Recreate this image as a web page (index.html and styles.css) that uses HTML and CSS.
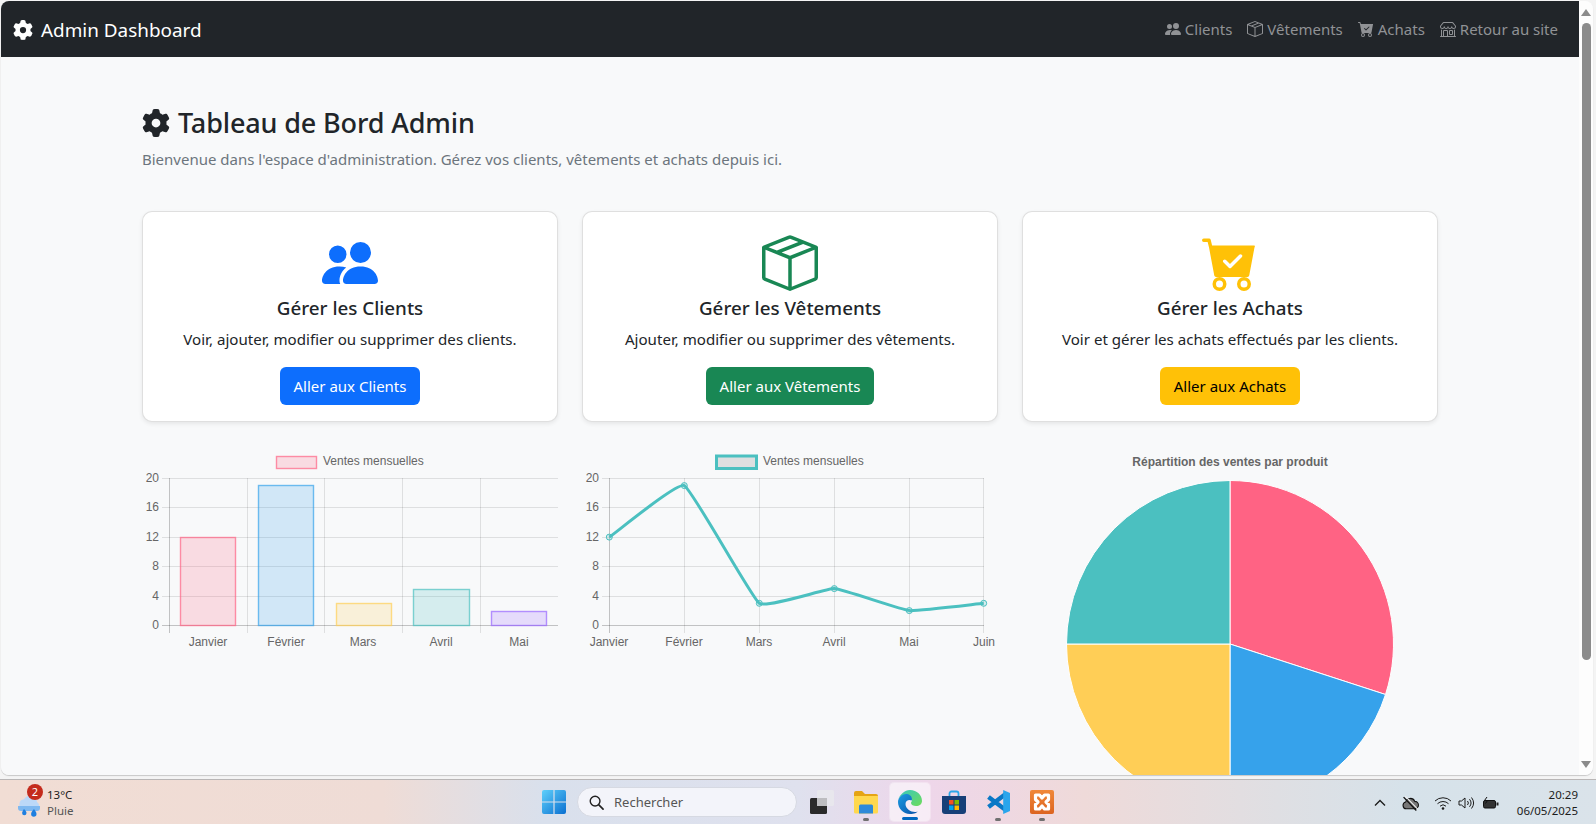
FILE: index.html
```html
<!DOCTYPE html>
<html lang="fr">
<head>
<meta charset="utf-8">
<title>Admin Dashboard</title>
<link rel="stylesheet" href="styles.css">
</head>
<body>
<svg class="defs" width="0" height="0" aria-hidden="true">
  <symbol id="i-gear" viewBox="0 0 512 512"><path d="M495.9 166.6c3.2 8.7 .5 18.4-6.4 24.6l-43.3 39.4c1.1 8.3 1.7 16.8 1.7 25.4s-.6 17.1-1.7 25.4l43.3 39.4c6.9 6.2 9.6 15.9 6.4 24.6c-4.4 11.9-9.7 23.3-15.8 34.3l-4.7 8.1c-6.6 11-14 21.4-22.1 31.2c-5.9 7.2-15.7 9.6-24.5 6.8l-55.7-17.7c-13.4 10.3-28.2 18.9-44 25.4l-12.5 57.1c-2 9.1-9 16.3-18.2 17.8c-13.8 2.3-28 3.5-42.5 3.5s-28.7-1.2-42.5-3.5c-9.2-1.5-16.2-8.7-18.2-17.8l-12.5-57.1c-15.8-6.5-30.6-15.1-44-25.4L83.1 425.9c-8.8 2.8-18.6 .3-24.5-6.8c-8.1-9.8-15.5-20.2-22.1-31.2l-4.7-8.1c-6.1-11-11.4-22.4-15.8-34.3c-3.2-8.7-.5-18.4 6.4-24.6l43.3-39.4C64.6 273.1 64 264.6 64 256s.6-17.1 1.7-25.4L22.4 191.2c-6.9-6.2-9.6-15.9-6.4-24.6c4.4-11.9 9.7-23.3 15.8-34.3l4.7-8.1c6.6-11 14-21.4 22.1-31.2c5.9-7.2 15.7-9.6 24.5-6.8l55.7 17.7c13.4-10.3 28.2-18.9 44-25.4l12.5-57.1c2-9.1 9-16.3 18.2-17.8C227.3 1.2 241.5 0 256 0s28.7 1.2 42.5 3.5c9.2 1.5 16.2 8.7 18.2 17.8l12.5 57.1c15.8 6.5 30.6 15.1 44 25.4l55.7-17.7c8.8-2.8 18.6-.3 24.5 6.8c8.1 9.8 15.5 20.2 22.1 31.2l4.7 8.1c6.1 11 11.4 22.4 15.8 34.3zM256 336a80 80 0 1 0 0-160 80 80 0 1 0 0 160z"/></symbol>
  <symbol id="i-people" viewBox="0 0 16 16"><path d="M7 14s-1 0-1-1 1-4 5-4 5 3 5 4-1 1-1 1H7Zm4-6a3 3 0 1 0 0-6 3 3 0 0 0 0 6Zm-5.784 6A2.238 2.238 0 0 1 5 13c0-1.355.68-2.75 1.936-3.72A6.325 6.325 0 0 0 5 9c-4 0-5 3-5 4s1 1 1 1h4.216ZM4.5 8a2.5 2.5 0 1 0 0-5 2.5 2.5 0 0 0 0 5Z"/></symbol>
  <symbol id="i-box" viewBox="0 0 16 16"><path d="M8.186 1.113a.5.5 0 0 0-.372 0L1.846 3.5l2.404.961L10.404 2l-2.218-.887zm3.564 1.426L5.596 5 8 5.961 14.154 3.5l-2.404-.961zm3.25 1.7-6.5 2.6v7.922l6.5-2.6V4.24zM7.5 14.762V6.838L1 4.239v7.925l6.5 2.6zM7.443.184a1.5 1.5 0 0 1 1.114 0l7.129 2.852A.5.5 0 0 1 16 3.5v8.662a1 1 0 0 1-.629.928l-7.185 2.874a.5.5 0 0 1-.372 0L.63 13.09a1 1 0 0 1-.63-.928V3.5a.5.5 0 0 1 .314-.464L7.443.184z"/></symbol>
  <symbol id="i-cart" viewBox="0 0 16 16"><path d="M.5 1a.5.5 0 0 0 0 1h1.11l.401 1.607 1.498 7.985A.5.5 0 0 0 4 12h1a2 2 0 1 0 0 4 2 2 0 0 0 0-4h7a2 2 0 1 0 0 4 2 2 0 0 0 0-4h1a.5.5 0 0 0 .491-.408l1.5-8A.5.5 0 0 0 15 3H2.89l-.405-1.621A.5.5 0 0 0 2 1H.5zM6 14a1 1 0 1 1-2 0 1 1 0 0 1 2 0zm7 0a1 1 0 1 1-2 0 1 1 0 0 1 2 0zm-1.646-7.646-3 3a.5.5 0 0 1-.708 0l-1.5-1.5a.5.5 0 1 1 .708-.708L8 8.293l2.646-2.647a.5.5 0 0 1 .708.708z"/></symbol>
  <symbol id="i-shop" viewBox="0 0 16 16"><path d="M2.97 1.35A1 1 0 0 1 3.73 1h8.54a1 1 0 0 1 .76.35l2.609 3.044A1.5 1.5 0 0 1 16 5.37v.255a2.375 2.375 0 0 1-4.25 1.458A2.371 2.371 0 0 1 9.875 8 2.37 2.37 0 0 1 8 7.083 2.37 2.37 0 0 1 6.125 8a2.37 2.37 0 0 1-1.875-.917A2.375 2.375 0 0 1 0 5.625V5.37a1.5 1.5 0 0 1 .361-.976l2.61-3.045zm1.78 4.275a1.375 1.375 0 0 0 2.75 0 .5.5 0 0 1 1 0 1.375 1.375 0 0 0 2.75 0 .5.5 0 0 1 1 0 1.375 1.375 0 1 0 2.75 0V5.37a.5.5 0 0 0-.12-.325L12.27 2H3.73L1.12 5.045A.5.5 0 0 0 1 5.37v.255a1.375 1.375 0 0 0 2.75 0 .5.5 0 0 1 1 0zM1.5 8.5A.5.5 0 0 1 2 9v6h1v-5a1 1 0 0 1 1-1h3a1 1 0 0 1 1 1v5h6V9a.5.5 0 0 1 1 0v6h.5a.5.5 0 0 1 0 1H.5a.5.5 0 0 1 0-1H1V9a.5.5 0 0 1 .5-.5zM4 15h3v-5H4v5zm5-5a1 1 0 0 1 1-1h2a1 1 0 0 1 1 1v3a1 1 0 0 1-1 1h-2a1 1 0 0 1-1-1v-3zm3 0h-2v3h2v-3z"/></symbol>
</svg>

<div class="window">
  <div class="page">
    <nav class="navbar">
      <a class="brand"><svg class="brand-icon"><use href="#i-gear"/></svg>Admin Dashboard</a>
      <div class="nav-links">
        <a class="nav-link"><svg class="nav-icon"><use href="#i-people"/></svg>Clients</a>
        <a class="nav-link"><svg class="nav-icon"><use href="#i-box"/></svg>Vêtements</a>
        <a class="nav-link"><svg class="nav-icon"><use href="#i-cart"/></svg>Achats</a>
        <a class="nav-link"><svg class="nav-icon"><use href="#i-shop"/></svg>Retour au site</a>
      </div>
    </nav>
    <main class="container">
      <h1 class="title"><svg class="title-icon"><use href="#i-gear"/></svg>Tableau de Bord Admin</h1>
      <p class="lead">Bienvenue dans l'espace d'administration. Gérez vos clients, vêtements et achats depuis ici.</p>

      <section class="cards">
        <article class="card">
          <svg class="card-icon blue"><use href="#i-people"/></svg>
          <h2 class="card-title">Gérer les Clients</h2>
          <p class="card-text">Voir, ajouter, modifier ou supprimer des clients.</p>
          <a class="btn btn-blue">Aller aux Clients</a>
        </article>
        <article class="card">
          <svg class="card-icon green"><use href="#i-box"/></svg>
          <h2 class="card-title">Gérer les Vêtements</h2>
          <p class="card-text">Ajouter, modifier ou supprimer des vêtements.</p>
          <a class="btn btn-green">Aller aux Vêtements</a>
        </article>
        <article class="card">
          <svg class="card-icon yellow"><use href="#i-cart"/></svg>
          <h2 class="card-title">Gérer les Achats</h2>
          <p class="card-text">Voir et gérer les achats effectués par les clients.</p>
          <a class="btn btn-yellow">Aller aux Achats</a>
        </article>
      </section>

      <section class="charts">
        <svg class="chart" viewBox="142 445 416 210">
          <rect class="lg-bar" x="276.5" y="456.5" width="40" height="12"/>
          <text class="t" x="323" y="465">Ventes mensuelles</text>
          <path class="grid" d="M170 478.5H558M170 507.5H558M170 537.5H558M170 566.5H558M170 596.5H558M247.5 478V633M324.5 478V633M402.5 478V633M480.5 478V633"/>
          <path class="grid" d="M162 478.5H170M162 507.5H170M162 537.5H170M162 566.5H170M162 596.5H170"/>
          <path class="axis" d="M169.5 478V633M162 625.5H558"/>
          <text class="t end" x="159" y="482">20</text>
          <text class="t end" x="159" y="511">16</text>
          <text class="t end" x="159" y="541">12</text>
          <text class="t end" x="159" y="570">8</text>
          <text class="t end" x="159" y="600">4</text>
          <text class="t end" x="159" y="629">0</text>
          <rect class="bar pink" x="180.5" y="537.5" width="55" height="88"/>
          <rect class="bar sky" x="258.5" y="485.500" width="55" height="140"/>
          <rect class="bar sun" x="336.5" y="603.5" width="55" height="22"/>
          <rect class="bar teal" x="413.5" y="589.5" width="56" height="36"/>
          <rect class="bar violet" x="491.5" y="611.5" width="55" height="14"/>
          <text class="t mid" x="208" y="646">Janvier</text>
          <text class="t mid" x="286" y="646">Février</text>
          <text class="t mid" x="363" y="646">Mars</text>
          <text class="t mid" x="441" y="646">Avril</text>
          <text class="t mid" x="519" y="646">Mai</text>
        </svg>

        <svg class="chart" viewBox="582 445 416 210">
          <rect class="lg-line" x="716.5" y="456" width="40" height="12.5"/>
          <text class="t" x="763" y="465">Ventes mensuelles</text>
          <path class="grid" d="M602 478.5H984M602 507.5H984M602 537.5H984M602 566.5H984M602 596.5H984M684.5 478V633M759.5 478V633M834.5 478V633M909.5 478V633M983.5 478V633"/>
          <path class="axis" d="M609.5 478V633M602 625.5H984"/>
          <text class="t end" x="599" y="482">20</text>
          <text class="t end" x="599" y="511">16</text>
          <text class="t end" x="599" y="541">12</text>
          <text class="t end" x="599" y="570">8</text>
          <text class="t end" x="599" y="600">4</text>
          <text class="t end" x="599" y="629">0</text>
          <path class="line" d="M609.3 537.1C617 531.9 676.8 482.3 684.3 485.6C691.8 488.9 751.8 598.15 759.3 603.3C766.8 608.45 826.8 588.2 834.3 588.6C841.8 589 901.8 609.9 909.3 610.6C916.8 611.3 976.3 604 983.7 603.3"/>
          <circle class="dot" cx="609.3" cy="537.1" r="3"/>
          <circle class="dot" cx="684.3" cy="485.6" r="3"/>
          <circle class="dot" cx="759.3" cy="603.3" r="3"/>
          <circle class="dot" cx="834.3" cy="588.6" r="3"/>
          <circle class="dot" cx="909.3" cy="610.6" r="3"/>
          <circle class="dot" cx="983.7" cy="603.3" r="3"/>
          <text class="t mid" x="609" y="646">Janvier</text>
          <text class="t mid" x="684" y="646">Février</text>
          <text class="t mid" x="759" y="646">Mars</text>
          <text class="t mid" x="834" y="646">Avril</text>
          <text class="t mid" x="909" y="646">Mai</text>
          <text class="t mid" x="984" y="646">Juin</text>
        </svg>

        <svg class="chart pie" viewBox="1022 445 416 375">
          <text class="t mid strong" x="1230" y="466">Répartition des ventes par produit</text>
          <path class="slice s1" d="M1230 644V480.5A163.5 163.5 0 0 1 1385.5 694.5Z"/>
          <path class="slice s2" d="M1230 644L1385.5 694.5A163.5 163.5 0 0 1 1230 807.5Z"/>
          <path class="slice s3" d="M1230 644V807.5A163.5 163.5 0 0 1 1066.5 644Z"/>
          <path class="slice s4" d="M1230 644H1066.5A163.5 163.5 0 0 1 1230 480.5Z"/>
        </svg>
      </section>
    </main>
  </div>
  <div class="scrollbar">
    <span class="arrow-up"></span>
    <span class="thumb"></span>
    <span class="arrow-down"></span>
  </div>
</div>

<footer class="taskbar">
  <div class="tb-left">
    <div class="weather">
      <svg class="weather-icon" viewBox="0 0 26 24">
        <path fill="#bcd8f8" d="M7 15a5 5 0 0 1 1-9.800A7 7 0 0 1 21 8a4 4 0 0 1 0 7Z"/>
        <path fill="#7fb8f0" d="M2 12h22v2a3 3 0 0 1-3 3H5a3 3 0 0 1-3-3Z"/>
        <path fill="#1f7fe0" d="M8 15c2 2 2.500 3 2.500 4a2.200 2.200 0 0 1-4.400 0c0-1 .9-2.500 1.900-4ZM18 15c1.500 2 2.500 3.500 2.500 5a2.700 2.700 0 0 1-5.400 0c0-1.500 1.400-3.500 2.900-5Z"/>
      </svg>
      <span class="badge">2</span>
      <div class="weather-text"><span class="temp">13°C</span><span class="cond">Pluie</span></div>
    </div>
  </div>
  <div class="tb-center">
    <div class="tb-item">
      <svg class="tb-icon" viewBox="0 0 24 24">
        <defs><linearGradient id="win" x1="0" y1="0" x2="1" y2="1"><stop offset="0" stop-color="#5fd0fb"/><stop offset="1" stop-color="#0a6fd0"/></linearGradient></defs>
        <path fill="url(#win)" d="M0 2a2 2 0 0 1 2-2h9.400v11.400H0ZM12.600 0H22a2 2 0 0 1 2 2v9.400H12.600ZM0 12.600h11.400V24H2a2 2 0 0 1-2-2ZM12.600 12.600H24V22a2 2 0 0 1-2 2h-9.400Z"/>
      </svg>
    </div>
    <div class="search">
      <svg class="search-icon" viewBox="0 0 16 16"><circle cx="6.500" cy="6.500" r="5.200" fill="none" stroke="#222" stroke-width="1.500"/><path d="M10.500 10.500 15 15" stroke="#222" stroke-width="1.800" stroke-linecap="round"/></svg>
      <span class="search-text">Rechercher</span>
    </div>
    <div class="tb-item">
      <svg class="tb-icon" viewBox="0 0 24 24">
        <rect x="0" y="8" width="17" height="16" rx="1.500" fill="#2a2a2a"/>
        <rect x="7" y="0" width="17" height="16" rx="1.500" fill="#e8e8ec" fill-opacity=".9"/>
        <rect x="7" y="8" width="10" height="8" fill="#bdbdc0"/>
      </svg>
    </div>
    <div class="tb-item has-dot">
      <svg class="tb-icon" viewBox="0 0 24 24">
        <path fill="#e5a414" d="M0 3a2 2 0 0 1 2-2h6l3 3h11a2 2 0 0 1 2 2v3H0Z"/>
        <path fill="#ffd84e" d="M0 6h24v16a1.500 1.500 0 0 1-1.500 1.500h-21A1.500 1.500 0 0 1 0 22Z"/>
        <path fill="#2e8ad8" d="M5 16a1.500 1.500 0 0 1 1.500-1.500h11A1.500 1.500 0 0 1 19 16v7.500H5Z"/>
      </svg>
    </div>
    <div class="tb-item active">
      <svg class="tb-icon" viewBox="0 0 24 24">
        <defs>
          <linearGradient id="edge1" x1="0" y1="0" x2="1" y2="1"><stop offset="0" stop-color="#36c7c0"/><stop offset="1" stop-color="#6fdc5a"/></linearGradient>
          <linearGradient id="edge2" x1="0" y1="0" x2="1" y2="1"><stop offset="0" stop-color="#1b9de2"/><stop offset="1" stop-color="#0a4fa8"/></linearGradient>
        </defs>
        <path fill="url(#edge1)" d="M12 0c7 0 12 5 12 11 0 3-2.500 5-6 5-2.500 0-5-1-5-3 0-1 1-1.500 1-3 0-3-3-5-6-5-4 0-7 2.500-8 5C2 4.500 6.500 0 12 0Z"/>
        <path fill="url(#edge2)" d="M0 12c0-4 4-8 8-8 3 0 6 2 6 5 0 .5-.1 1-.4 1.500-2.600-1.500-6.100.1-6.100 3.500 0 4.500 5 8 9.500 8 1.500 0 2.500-.2 3.500-.8A12 12 0 0 1 12 24C5 24 0 18 0 12Z"/>
      </svg>
      <span class="active-bar"></span>
    </div>
    <div class="tb-item">
      <svg class="tb-icon" viewBox="0 0 24 24">
        <path fill="none" stroke="#2ba6e8" stroke-width="1.800" d="M7.500 7V3.500a2 2 0 0 1 2-2h5a2 2 0 0 1 2 2V7"/>
        <path fill="#173f78" d="M0 6h24v15a3 3 0 0 1-3 3H3a3 3 0 0 1-3-3Z"/>
        <rect x="7" y="10" width="4.500" height="4.500" fill="#f25022"/><rect x="12.500" y="10" width="4.500" height="4.500" fill="#7fba00"/>
        <rect x="7" y="15.500" width="4.500" height="4.500" fill="#00a4ef"/><rect x="12.500" y="15.500" width="4.500" height="4.500" fill="#ffb900"/>
      </svg>
    </div>
    <div class="tb-item has-dot">
      <svg class="tb-icon" viewBox="0 0 24 24">
        <path fill="none" stroke="#0a78c6" stroke-width="4.500" d="M20 3.800 2.500 17M20 20.200 2.500 7"/>
        <path fill="#2aa5ec" d="M17.200 0 24 3v18l-6.800 3Z"/>
      </svg>
    </div>
    <div class="tb-item has-dot">
      <svg class="tb-icon" viewBox="0 0 24 24">
        <defs><linearGradient id="xa" x1="0" y1="0" x2="0" y2="1"><stop offset="0" stop-color="#f0883a"/><stop offset="1" stop-color="#dc6420"/></linearGradient></defs>
        <rect width="24" height="24" rx="2" fill="url(#xa)"/>
        <path fill="none" stroke="#fff" stroke-width="3.200" stroke-linejoin="round" d="M5.500 5H9.500L12 8l2.500-3H18.500V9.500L16 12l2.500 2.500V19H14.500L12 16l-2.500 3H5.500V14.500L8 12 5.500 9.500Z"/>
      </svg>
    </div>
  </div>
  <div class="tb-right">
    <svg class="tray tray-chev" viewBox="0 0 12 8"><path d="M1 6.500 6 1.500l5 5" fill="none" stroke="#1c1c1c" stroke-width="1.400"/></svg>
    <svg class="tray tray-cloud" viewBox="0 0 16 14"><path d="M4 12a3.300 3.300 0 0 1-.5-6.500A4.500 4.500 0 0 1 12 5a3.500 3.500 0 0 1 0 7Z" fill="#777" stroke="#111" stroke-width="1"/><path d="M1.500 1 13.500 13.500" stroke="#111" stroke-width="1.300"/><path d="M3 0 15 12.500" stroke="#eee" stroke-width="1"/></svg>
    <svg class="tray tray-wifi" viewBox="0 0 18 14"><path d="M1 5a11.500 11.500 0 0 1 16 0M3.500 7.700a8 8 0 0 1 11 0M6 10.200a4.300 4.300 0 0 1 6 0" fill="none" stroke="#1c1c1c" stroke-width="1"/><circle cx="9" cy="12.500" r="1.300" fill="#1c1c1c"/></svg>
    <svg class="tray tray-vol" viewBox="0 0 17 14"><path d="M1 5h2.500L7 2v10L3.500 9H1Z" fill="none" stroke="#1c1c1c" stroke-width="1"/><path d="M9.500 5a3 3 0 0 1 0 4M11.500 3.200a6 6 0 0 1 0 7.600M13.500 1.500a9 9 0 0 1 0 11" fill="none" stroke="#1c1c1c" stroke-width="1"/></svg>
    <svg class="tray tray-bat" viewBox="0 0 17 12"><rect x="1.500" y="3.500" width="12" height="7.500" rx="1.500" fill="#333" stroke="#111"/><rect x="14.500" y="5.500" width="2" height="3" fill="#222"/><path d="M5 0 2.500 3.500h3L3.500 6.500" fill="none" stroke="#111" stroke-width="1"/></svg>
    <div class="clock"><span>20:29</span><span>06/05/2025</span></div>
  </div>
</footer>
</body>
</html>
```
FILE: styles.css
```css
* { box-sizing: border-box; }
html, body { margin: 0; height: 100%; overflow: hidden; }
body {
  display: flex;
  flex-direction: column;
  height: 824px;
  background: #f4f4f4;
  font-family: "Noto Sans", "Open Sans", sans-serif;
  color: #212529;
}
.defs { position: absolute; }

.window {
  display: flex;
  height: 774px;
  margin: 1px 3px 4px 1px;
  border-radius: 8px;
  overflow: hidden;
  background: #f8f9fa;
  box-shadow: 0 1px 1px rgba(0,0,0,.18);
  flex: none;
}
.page {
  flex: 1;
  min-width: 0;
  overflow: hidden;
  background: #f8f9fa;
}
.scrollbar {
  width: 14px;
  flex: none;
  background: #fdfdfd;
  display: flex;
  flex-direction: column;
  align-items: center;
  padding: 8px 0 7px;
}
.thumb { width: 9px; height: 637px; margin-top: 7px; border-radius: 5px; background: #8b8b8b; }
.arrow-up, .arrow-down { width: 0; height: 0; border-left: 5px solid transparent; border-right: 5px solid transparent; }
.arrow-up { border-bottom: 7px solid #8b8b8b; }
.arrow-down { margin-top: auto; border-top: 7px solid #8b8b8b; }

.navbar {
  display: flex;
  align-items: center;
  justify-content: space-between;
  height: 56px;
  padding: 0 21px 0 12px;
  background: #212529;
}
.brand { display: flex; align-items: center; margin-top: 1px; color: #fff; font-size: 18.900px; }
.brand-icon { width: 20px; height: 20px; margin-right: 8px; fill: #fff; }
.nav-links { display: flex; gap: 15px; }
.nav-link { display: flex; align-items: center; color: #909295; font-size: 15px; }
.nav-icon { width: 16px; height: 16px; margin-right: 4px; fill: #909295; }

.container { width: 1320px; margin: 48px auto 0; padding: 0 12px; }
.title { display: flex; align-items: center; margin: 0 0 6px; font-size: 27px; letter-spacing: -.14px; line-height: 36px; font-weight: 500; color: #212529; }
.title-icon { width: 28px; height: 28px; margin-right: 8px; fill: #212529; }
.lead { margin: 0 0 40px; font-size: 15px; line-height: 24px; color: #6c757d; }

.cards { display: grid; grid-template-columns: repeat(3, 416px); gap: 24px; margin-bottom: 23px; }
.card {
  display: flex;
  flex-direction: column;
  align-items: center;
  padding: 23px 16px 16px;
  border: 1px solid rgba(0,0,0,.125);
  border-radius: 10px;
  background: #fff;
  box-shadow: 0 2px 4px rgba(0,0,0,.075);
  text-align: center;
}
.card-icon { width: 56px; height: 56px; }
.blue { fill: #0d6efd; }
.green { fill: #198754; }
.yellow { fill: #ffc107; }
.card-title { margin: 5px 0 7px; font-size: 18.800px; line-height: 24px; font-weight: 500; color: #212529; }
.card-text { margin: 0 0 16px; font-size: 15.100px; line-height: 24px; color: #212529; }
.btn { display: flex; align-items: center; height: 38px; padding: 0 13.500px; border-radius: 6px; font-size: 15px; }
.btn-blue { background: #0d6efd; color: #fff; }
.btn-green { background: #198754; color: #fff; }
.btn-yellow { background: #ffc107; color: #000; }

.charts { display: grid; grid-template-columns: repeat(3, 416px); gap: 24px; align-items: start; }
.chart { display: block; width: 416px; height: 210px; overflow: visible; }
.chart.pie { height: 375px; }
.t { font-family: "Liberation Sans", Arial, sans-serif; font-size: 12px; fill: #666; }
.end { text-anchor: end; }
.mid { text-anchor: middle; }
.strong { font-weight: 700; }
.grid { stroke: rgba(0,0,0,.1); stroke-width: 1; fill: none; }
.axis { stroke: rgba(0,0,0,.22); stroke-width: 1; fill: none; }
.bar { stroke-width: 1.400; stroke-opacity: .7; }
.pink { fill: rgba(255,99,132,.2); stroke: #ff6384; }
.sky { fill: rgba(54,162,235,.2); stroke: #36a2eb; }
.sun { fill: rgba(255,206,86,.2); stroke: #ffce56; }
.teal { fill: rgba(75,192,192,.2); stroke: #4bc0c0; }
.violet { fill: rgba(153,102,255,.2); stroke: #9966ff; }
.lg-bar { fill: rgba(255,99,132,.2); stroke: #ff6384; stroke-width: 1.400; stroke-opacity: .7; }
.lg-line { fill: rgba(0,0,0,.1); stroke: #4bc0c0; stroke-width: 3; }
.line { fill: none; stroke: #4bc0c0; stroke-width: 3; stroke-linejoin: round; }
.dot { fill: rgba(75,192,192,.2); stroke: #4bc0c0; stroke-width: 1; }
.slice { stroke: #fff; stroke-width: 1; }
.s1 { fill: #ff6384; }
.s2 { fill: #36a2eb; }
.s3 { fill: #ffce56; }
.s4 { fill: #4bc0c0; }

.taskbar {
  flex: none;
  height: 45px;
  display: grid;
  grid-template-columns: 1fr auto 1fr;
  align-items: center;
  border-top: 1px solid #b9b6b6;
  background: linear-gradient(90deg, #f1ddd4 0%, #efdcd6 24%, #d9e0ec 34%, #dfe1ee 50%, #eed6ea 58%, #efdad9 68%, #dfdfe3 80%, #d6e2ea 88%, #dae3ea 100%);
}
.tb-left { display: flex; padding: 2px 0 0 16px; }
.weather { position: relative; display: flex; align-items: center; gap: 5px; }
.weather-icon { width: 26px; height: 24px; margin-top: 5px; }
.badge {
  position: absolute;
  left: 11px;
  top: -3px;
  width: 16px;
  height: 16px;
  border-radius: 50%;
  background: #c42b1c;
  color: #fff;
  font-size: 11px;
  line-height: 16px;
  text-align: center;
}
.weather-text { display: flex; flex-direction: column; font-size: 11.500px; line-height: 16px; }
.temp { color: #1c1c1c; }
.cond { color: #555; }

.tb-center { display: flex; align-items: center; gap: 4px; }
.tb-item { position: relative; width: 40px; height: 38px; display: flex; align-items: center; justify-content: center; border-radius: 4px; }
.tb-icon { width: 24px; height: 24px; }
.search {
  width: 220px;
  height: 30px;
  margin-left: -1px;
  margin-right: 1px;
  display: flex;
  align-items: center;
  padding-left: 11px;
  border: 1px solid #d6d9e2;
  border-radius: 15px;
  background: #f3f4fa;
}
.search-icon { width: 15px; height: 15px; margin-right: 10px; }
.search-text { font-size: 13px; color: #555; }
.active { background: rgba(255,255,255,.55); box-shadow: 0 0 0 1px rgba(255,255,255,.3); }
.active-bar { position: absolute; left: 12px; bottom: 1px; width: 16px; height: 3px; border-radius: 2px; background: #0067c0; }
.has-dot::after { content: ""; position: absolute; left: 17px; bottom: 0; width: 6px; height: 3px; border-radius: 2px; background: #707070; }

.tb-right { display: flex; align-items: center; justify-content: flex-end; padding: 2px 18px 0 0; }
.tray { flex: none; }
.tray-chev { width: 12px; height: 8px; margin-right: 16px; }
.tray-cloud { width: 17px; height: 15px; margin-right: 15px; }
.tray-wifi { width: 18px; height: 14px; margin-right: 6px; }
.tray-vol { width: 17px; height: 14px; margin-right: 7px; }
.tray-bat { width: 17px; height: 12px; margin-right: 18px; }
.clock { display: flex; flex-direction: column; align-items: flex-end; font-size: 11.500px; line-height: 16px; color: #1c1c1c; }
```
